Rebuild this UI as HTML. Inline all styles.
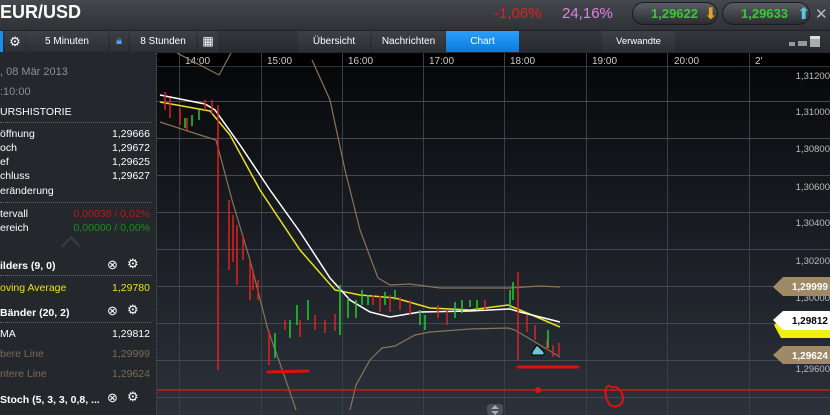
<!DOCTYPE html>
<html><head><meta charset="utf-8"><style>
*{margin:0;padding:0;box-sizing:border-box}
body{width:830px;height:415px;overflow:hidden;background:#1e2125;font-family:"Liberation Sans",sans-serif;position:relative}
.a{position:absolute;white-space:nowrap}
#top{left:0;top:0;width:830px;height:30px;background:linear-gradient(#45484e,#2e3135)}
#tb{left:0;top:30px;width:830px;height:23px;background:linear-gradient(#34373c,#25282c);border-top:1px solid #202226}
.btn{position:absolute;top:31px;height:21px;background:linear-gradient(#3d4046,#2c2f33);color:#fff;font-size:10px;line-height:21px;text-align:center}
#lp{left:0;top:53px;width:157px;height:362px;background:#24272b;border-right:1px dotted #555}
.r{position:absolute;font-size:10.5px;color:#fff}
.v{position:absolute;right:6px;font-size:10.5px;color:#fff}
.dot{position:absolute;left:0;width:152px;border-top:1px dotted #666}
.b{font-weight:bold}
.pill{position:absolute;top:2px;height:23px;border-radius:12px;background:linear-gradient(#5a5e64,#2a2d31);border:1px solid #1a1c1f;color:#3c3;font-size:13px;font-weight:bold;line-height:21px;padding-left:18px}
.pl{position:absolute;font-size:9px;color:#ccc;right:2px}
</style></head><body>
<div id="top" class="a"></div>
<div class="a" style="left:0;top:2px;color:#fff;font-size:18px;font-weight:bold">EUR/USD</div>
<div class="a" style="left:494px;top:5px;color:#e02020;font-size:15px">-1,06%</div>
<div class="a" style="left:562px;top:5px;color:#e080e0;font-size:15px">24,16%</div>
<div class="pill" style="left:632px;width:86px">1,29622</div>
<div class="a" style="left:704px;top:4px;color:#f0a020;font-size:16px">&#x2B07;</div>
<div class="pill" style="left:722px;width:88px">1,29633</div>
<div class="a" style="left:797px;top:4px;color:#5bc8e0;font-size:16px">&#x2B06;</div>
<div class="a" style="left:815px;top:5px;color:#bbb;font-size:15px">✕</div>

<div id="tb" class="a"></div>
<div class="a" style="left:0;top:31px;width:3px;height:21px;background:#1a8ee8"></div>
<div class="btn" style="left:5px;width:20px;font-size:13px">⚙</div>
<div class="btn" style="left:26px;width:82px">5 Minuten</div>
<div class="btn" style="left:110px;width:18px;color:#4af;font-size:11px">🔒︎</div>
<div class="btn" style="left:130px;width:66px">8 Stunden</div>
<div class="btn" style="left:198px;width:20px;font-size:12px">▦</div>
<div class="btn" style="left:298px;width:72px">Übersicht</div>
<div class="btn" style="left:372px;width:73px">Nachrichten</div>
<div class="btn" style="left:446px;width:73px;background:linear-gradient(#2aa0ff,#0a7ad8)">Chart</div>
<div class="btn" style="left:602px;width:73px;font-size:9.5px">Verwandte</div>
<div class="a" style="left:789px;top:42px;width:6px;height:4px;background:#999"></div>
<div class="a" style="left:798px;top:41px;width:9px;height:5px;background:#999"></div>
<div class="a" style="left:810px;top:36px;width:10px;height:11px;background:#aaa;border-top:3px solid #ddd"></div>

<div id="lp" class="a">
<div class="r" style="left:0;top:13px;color:#8a9099;font-size:11px">, 08 Mär 2013</div>
<div class="r" style="left:0;top:33px;color:#8a9099;font-size:11px">:10:00</div>
<div class="r" style="left:0;top:53px">URSHISTORIE</div>
<div class="dot" style="top:69px"></div>
<div class="r" style="left:0;top:75px">öffnung</div><div class="v" style="top:75px">1,29666</div>
<div class="r" style="left:0;top:89px">och</div><div class="v" style="top:89px">1,29672</div>
<div class="r" style="left:0;top:103px">ef</div><div class="v" style="top:103px">1,29625</div>
<div class="r" style="left:0;top:117px">chluss</div><div class="v" style="top:117px">1,29627</div>
<div class="r" style="left:0;top:132px">eränderung</div>
<div class="dot" style="top:149px"></div>
<div class="r" style="left:0;top:155px">tervall</div><div class="v" style="top:155px;color:#c01818">0,00038 / 0,02%</div>
<div class="r" style="left:0;top:169px">ereich</div><div class="v" style="top:169px;color:#189018">0,00000 / 0,00%</div>
<div class="a" style="left:64px;top:186px;width:14px;height:14px;border-left:2px solid #3a3e44;border-top:2px solid #3a3e44;transform:rotate(45deg)"></div>
<div class="r b" style="left:0;top:207px">ilders (9, 0)</div>
<div class="r" style="left:107px;top:204px;font-size:13px">⊗</div><div class="r" style="left:127px;top:203px;font-size:13px">⚙</div>
<div class="dot" style="top:222px"></div>
<div class="r" style="left:0;top:229px;color:#e8e020">oving Average</div><div class="v" style="top:229px;color:#e8e020">1,29780</div>
<div class="r b" style="left:0;top:254px">Bänder (20, 2)</div>
<div class="r" style="left:107px;top:250px;font-size:13px">⊗</div><div class="r" style="left:127px;top:249px;font-size:13px">⚙</div>
<div class="dot" style="top:269px"></div>
<div class="r" style="left:0;top:275px">MA</div><div class="v" style="top:275px">1,29812</div>
<div class="r" style="left:0;top:295px;color:#7a6c58">bere Line</div><div class="v" style="top:295px;color:#7a6c58">1,29999</div>
<div class="r" style="left:0;top:315px;color:#7a6c58">ntere Line</div><div class="v" style="top:315px;color:#7a6c58">1,29624</div>
<div class="r b" style="left:0;top:341px">Stoch (5, 3, 3, 0,8, ...</div>
<div class="r" style="left:107px;top:337px;font-size:13px">⊗</div><div class="r" style="left:127px;top:336px;font-size:13px">⚙</div>
</div>

<svg class="a" style="left:157px;top:53px" width="673" height="362" viewBox="157 53 673 362">
<defs><linearGradient id="g" x1="0" y1="0" x2="0" y2="1"><stop offset="0" stop-color="#050608"/><stop offset="0.35" stop-color="#14171c"/><stop offset="1" stop-color="#2c313a"/></linearGradient></defs>
<rect x="157" y="53" width="673" height="362" fill="url(#g)"/>
<rect x="157" y="53" width="673" height="13" fill="#000"/>
<g stroke="#3a3f47" stroke-width="1">
<line x1="157" y1="66.5" x2="830" y2="66.5" stroke="#333"/>
<path d="M179.5 53V415M261.5 53V415M342.5 53V415M423.5 53V415M504.5 53V415M586.5 53V415M667.5 53V415M749.5 53V415"/>
<path d="M157 101.5H830M157 138.5H830M157 175.5H830M157 212.5H830M157 249.5H830M157 286.5H830M157 323.5H830M157 360.5H830M157 397.5H830" stroke="#454a52"/>
</g>
<g fill="#ccc" font-size="10" font-family="Liberation Sans">
<text x="185" y="64">14:00</text><text x="267" y="64">15:00</text><text x="348" y="64">16:00</text><text x="429" y="64">17:00</text><text x="510" y="64">18:00</text><text x="592" y="64">19:00</text><text x="674" y="64">20:00</text><text x="755" y="64">2'</text>
</g>
<g fill="#bbb" font-size="9.5" font-family="Liberation Sans" text-anchor="end">
<text x="830" y="79">1,31200</text><text x="830" y="115">1,31000</text><text x="830" y="152">1,30800</text><text x="830" y="190">1,30600</text><text x="830" y="226">1,30400</text><text x="830" y="264">1,30200</text><text x="830" y="301">1,30000</text><text x="830" y="372">1,29600</text>
</g>
<g fill="none" stroke="#8a7458" stroke-width="1.2">
<polyline points="177,53 219,75 231,53"/>
<polyline points="312,60 330,100 345,170 360,230 378,278 390,285 410,284 440,288 510,288 540,286 560,287"/>
<polyline points="160,122 200,135 216,140 232,200 250,260 268,330 283,372 296,410"/>
<polyline points="350,410 356,385 370,360 382,348 395,346 415,335 430,332 470,329 508,328 515,330 540,345 560,357"/>
</g>
<polyline fill="none" stroke="#e8e020" stroke-width="1.5" points="160,102 210,111 230,135 260,190 300,250 335,290 360,295 395,298 430,308 470,310 508,305 520,310 560,327"/>
<polyline fill="none" stroke="#fff" stroke-width="1.5" points="160,95 205,104 215,110 240,145 270,190 300,232 330,278 350,300 370,312 390,317 420,312 470,311 510,309 520,312 560,322"/>
<g stroke="#e02020" stroke-width="1.5">
<path d="M165 92V110M170 98V118M180 108V125M187 118V132M205 100V110M212 100V114M218 105V370M229 200V270M233 215V262M237 225V285M243 235V260M250 260V300M253 270V290M258 280V300M269 330V365M285 320V330M300 320V337M315 315V330M325 320V333M335 314V331M373 295V305M380 296V312M390 295V312M400 297V310M410 300V315M438 305V318M447 310V325M485 300V310M518 272V360M527 315V332M535 325V340M547 340V350M553 345V357M559 343V355"/>
</g>
<g stroke="#22cc33" stroke-width="1.5">
<path d="M185 118V128M192 115V126M199 110V120M275 333V358M290 320V338M297 305V325M308 300V320M340 285V335M348 298V318M356 300V318M362 290V305M368 295V305M385 292V305M395 290V300M420 310V325M425 315V330M455 302V318M462 300V313M470 300V307M477 300V310M510 290V308M513 282V300M548 330V348"/>
</g>
<polygon points="532,352 537,345 544,352 544,355 532,355" fill="#6cc8d8" stroke="#000" stroke-width="1"/>
<g stroke="#e01010" stroke-width="3" stroke-linecap="round">
<line x1="268" y1="372" x2="308" y2="371"/><line x1="518" y1="367" x2="578" y2="367"/>
</g>
<line x1="157" y1="390" x2="830" y2="390" stroke="#d01818" stroke-width="1.5"/>
<circle cx="538" cy="390" r="3" fill="#e01010"/>
<path d="M612 388C606 380 602 395 610 405C618 410 626 402 622 394C620 388 614 385 612 388" fill="none" stroke="#e01010" stroke-width="2"/>
<polygon points="773,287 783,277 830,277 830,296 783,296" fill="#a08a66"/>
<text x="828" y="290" text-anchor="end" fill="#fff" font-size="10" font-weight="bold" font-family="Liberation Sans">1,29999</text>
<polygon points="774,325 781,319 830,319 830,338 781,338" fill="#f0f010"/>
<polygon points="773,320 783,311 830,311 830,330 783,330" fill="#fff"/>
<text x="828" y="324" text-anchor="end" fill="#000" font-size="10" font-weight="bold" font-family="Liberation Sans">1,29812</text>
<polygon points="773,355 783,346 830,346 830,364 783,364" fill="#a08a66"/>
<text x="828" y="359" text-anchor="end" fill="#fff" font-size="10" font-weight="bold" font-family="Liberation Sans">1,29624</text>
<rect x="487" y="404" width="16" height="11" rx="3" fill="#4a5058"/>
<path d="M491 409L495 405L499 409ZM491 411L495 415L499 411Z" fill="#aab"/>
</svg>
</body></html>
